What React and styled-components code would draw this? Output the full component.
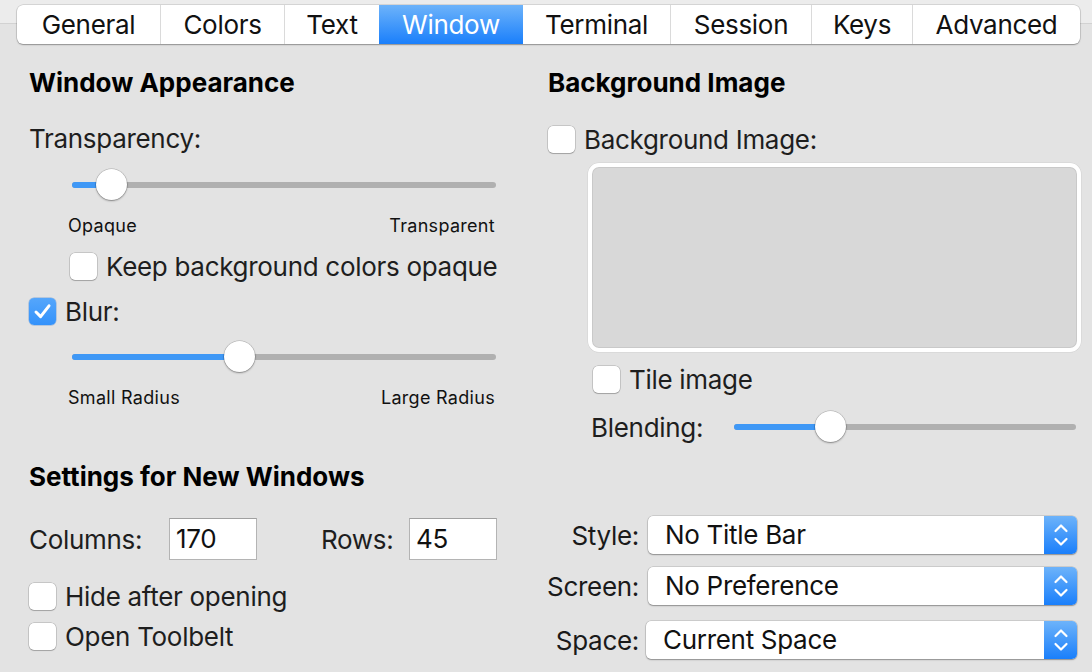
import React from "react";
import styled, { createGlobalStyle } from "styled-components";

const Global = createGlobalStyle`
  html, body { margin: 0; padding: 0; }
  body {
    background: #e3e3e3;
    font-family: Inter, "Noto Sans", "Liberation Sans", sans-serif;
    color: #222;
    width: 1092px;
    height: 672px;
    overflow: hidden;
    letter-spacing: -0.3px;
    white-space: nowrap;
  }
`;

const Page = styled.div`
  width: 1092px;
  height: 672px;
  background: #e3e3e3;
  overflow: hidden;
`;

const Header = styled.div`
  padding: 5px 0 0 17px;
  background: linear-gradient(
    to bottom,
    #ececec 0,
    #ececec 23px,
    #d2d2d2 23px,
    #d2d2d2 24px,
    #e3e3e3 24px
  );
`;

const Segmented = styled.div`
  display: flex;
  width: 1063px;
  height: 39px;
  background: #fff;
  border-radius: 6px;
  overflow: hidden;
  box-shadow: 0 0 0 0.5px rgba(0, 0, 0, 0.18), 0 1px 1.5px rgba(0, 0, 0, 0.3);
`;

const Segment = styled.div`
  width: ${(p) => p.$w}px;
  flex: none;
  display: flex;
  align-items: center;
  justify-content: center;
  font-size: 26px;
  color: ${(p) => (p.$active ? "#fff" : "#111")};
  background: ${(p) =>
    p.$active ? "linear-gradient(to bottom, #6db3fa, #1a7ffb)" : "transparent"};
  border-left: ${(p) => (p.$first || p.$active || p.$afterActive ? "none" : "1px solid #dadada")};
  box-sizing: border-box;
`;

const Body = styled.div`
  display: flex;
  padding: 23px 0 0 29px;
  gap: 51px;
`;

const LeftCol = styled.div`
  width: 468px;
  display: flex;
  flex-direction: column;
`;

const RightCol = styled.div`
  width: 533px;
  display: flex;
  flex-direction: column;
`;

const Heading = styled.div`
  font-size: 26px;
  font-weight: 700;
  color: #000;
  line-height: 32px;
  letter-spacing: 0;
  margin-top: ${(p) => p.$mt || 0}px;
`;

const Label = styled.div`
  font-size: 26px;
  line-height: 32px;
  color: #1e1e1e;
  margin-top: ${(p) => p.$mt || 0}px;
  padding-left: ${(p) => p.$indent || 0}px;
`;

const SliderWrap = styled.div`
  position: relative;
  height: 32px;
  margin-top: ${(p) => p.$mt || 0}px;
  margin-left: ${(p) => p.$indent || 0}px;
  width: ${(p) => p.$w}px;
  flex: none;
`;

const Track = styled.div`
  position: absolute;
  left: 0;
  right: 0;
  top: 13px;
  height: 6px;
  border-radius: 3px;
  background: #b0b0b0;
`;

const Fill = styled.div`
  position: absolute;
  left: 0;
  top: 13px;
  height: 6px;
  border-radius: 3px;
  background: #3f98f6;
`;

const Knob = styled.div`
  position: absolute;
  top: 0;
  width: 31px;
  height: 31px;
  margin-left: -15.5px;
  border-radius: 50%;
  background: #fff;
  box-shadow: 0 0 0 0.5px rgba(0, 0, 0, 0.22), 0 1px 2px rgba(0, 0, 0, 0.35);
`;

function Slider({ w, value, indent, mt }) {
  return (
    <SliderWrap $w={w} $indent={indent} $mt={mt}>
      <Track />
      <Fill style={{ width: value }} />
      <Knob style={{ left: value }} />
    </SliderWrap>
  );
}

const EndLabels = styled.div`
  display: flex;
  justify-content: space-between;
  font-size: 18px;
  line-height: 22px;
  letter-spacing: 0.3px;
  color: #111;
  margin-top: ${(p) => p.$mt || 0}px;
  padding-left: 39px;
  width: 427px;
`;

const CheckRow = styled.div`
  display: flex;
  align-items: center;
  gap: 9px;
  height: 32px;
  font-size: 26px;
  color: #1e1e1e;
  margin-top: ${(p) => p.$mt || 0}px;
  padding-left: ${(p) => p.$indent || 0}px;
`;

const Box = styled.div`
  width: 27px;
  height: 27px;
  flex: none;
  box-sizing: border-box;
  border-radius: 5px;
  display: flex;
  align-items: center;
  justify-content: center;
  background: ${(p) => (p.$checked ? "linear-gradient(to bottom, #55a6fb, #3392fb)" : "#fff")};
  box-shadow: ${(p) =>
    p.$checked
      ? "0 0 0 0.5px rgba(0,90,200,0.4)"
      : "0 0 0 0.5px rgba(0,0,0,0.25), 0 1px 1px rgba(0,0,0,0.18)"};
`;

function Check({ checked, children, indent, mt }) {
  return (
    <CheckRow $indent={indent} $mt={mt}>
      <Box $checked={checked}>
        {checked && (
          <svg width="21" height="21" viewBox="0 0 21 21">
            <path
              d="M4 11 L8.6 15.6 L17 4.8"
              fill="none"
              stroke="#fff"
              strokeWidth="3"
              strokeLinecap="round"
              strokeLinejoin="round"
            />
          </svg>
        )}
      </Box>
      <span>{children}</span>
    </CheckRow>
  );
}

const SizeRow = styled.div`
  display: grid;
  grid-template-columns: 140px 88px 64px 88px 88px;
  align-items: center;
  margin-top: 25px;
  font-size: 26px;
  color: #1e1e1e;
`;

const NumInput = styled.div`
  height: 42px;
  box-sizing: border-box;
  border: 1px solid #b4b4b4;
  border-top-color: #a0a0a0;
  background: #fff;
  font-size: 26px;
  line-height: 40px;
  padding-left: 6px;
  color: #111;
`;

const Well = styled.div`
  margin: 8px 0 0 40px;
  width: 493px;
  height: 189px;
  box-sizing: border-box;
  border: 4px solid #fff;
  border-radius: 11px;
  background: #d8d8d8;
  box-shadow: inset 0 0 0 1px #c9c9c9, 0 0 0 0.5px rgba(0, 0, 0, 0.08);
`;

const BlendRow = styled.div`
  display: flex;
  align-items: center;
  justify-content: space-between;
  width: 485px;
  margin-top: 16px;
  padding-left: 43px;
  font-size: 26px;
  color: #1e1e1e;
`;

const PopupGrid = styled.div`
  display: grid;
  grid-template-columns: 91px 429px;
  column-gap: 9px;
  align-items: center;
  margin-top: 73px;
`;

const PopLabel = styled.div`
  justify-self: end;
  font-size: 26px;
  color: #1a1a1a;
  margin-top: ${(p) => p.$mt || 0}px;
`;

const Popup = styled.div`
  display: flex;
  height: 38px;
  border-radius: 5px;
  background: #fff;
  box-shadow: 0 0 0 0.5px rgba(0, 0, 0, 0.2), 0 1px 1.5px rgba(0, 0, 0, 0.3);
  overflow: hidden;
  margin-left: ${(p) => p.$shift || 0}px;
  margin-top: ${(p) => p.$mt || 0}px;
`;

const PopText = styled.div`
  flex: 1;
  font-size: 26px;
  line-height: 38px;
  padding-left: 17px;
  color: #111;
`;

const Stepper = styled.div`
  width: 33px;
  flex: none;
  display: flex;
  align-items: center;
  justify-content: center;
  background: linear-gradient(to bottom, #6db3fa, #1a7ffb);
`;

function PopupField({ label, value, shift, mt }) {
  return (
    <>
      <PopLabel $mt={mt}>{label}</PopLabel>
      <Popup $shift={shift} $mt={mt}>
        <PopText>{value}</PopText>
        <Stepper>
          <svg width="18" height="28" viewBox="0 0 18 28">
            <path
              d="M3.5 10 L9 4.5 L14.5 10 M3.5 18 L9 23.5 L14.5 18"
              fill="none"
              stroke="#fff"
              strokeWidth="2.2"
              strokeLinecap="round"
              strokeLinejoin="round"
            />
          </svg>
        </Stepper>
      </Popup>
    </>
  );
}

const tabs = [
  ["General", 143],
  ["Colors", 124],
  ["Text", 95],
  ["Window", 144],
  ["Terminal", 147],
  ["Session", 141],
  ["Keys", 101],
  ["Advanced", 168],
];

export default function App() {
  const activeIdx = 3;
  return (
    <Page>
      <Global />
      <Header>
        <Segmented>
          {tabs.map(([t, w], i) => (
            <Segment
              key={t}
              $w={w}
              $first={i === 0}
              $active={i === activeIdx}
              $afterActive={i === activeIdx + 1}
            >
              {t}
            </Segment>
          ))}
        </Segmented>
      </Header>
      <Body>
        <LeftCol>
          <Heading>Window Appearance</Heading>
          <Label $mt={24}>Transparency:</Label>
          <Slider w={424} value={39} indent={43} mt={14} />
          <EndLabels $mt={14}>
            <span>Opaque</span>
            <span>Transparent</span>
          </EndLabels>
          <Check indent={41} mt={13}>
            Keep background colors opaque
          </Check>
          <Check checked mt={13}>
            Blur:
          </Check>
          <Slider w={424} value={167} indent={43} mt={14} />
          <EndLabels $mt={14}>
            <span>Small Radius</span>
            <span>Large Radius</span>
          </EndLabels>
          <Heading $mt={52}>Settings for New Windows</Heading>
          <SizeRow>
            <span>Columns:</span>
            <NumInput>170</NumInput>
            <span />
            <span>Rows:</span>
            <NumInput>45</NumInput>
          </SizeRow>
          <Check mt={20}>Hide after opening</Check>
          <Check mt={8}>Open Toolbelt</Check>
        </LeftCol>
        <RightCol>
          <Heading>Background Image</Heading>
          <Check mt={24}>Background Image:</Check>
          <Well />
          <Check indent={45} mt={11}>
            Tile image
          </Check>
          <BlendRow>
            <span>Blending:</span>
            <Slider w={342} value={96} />
          </BlendRow>
          <PopupGrid>
            <PopupField label="Style:" value="No Title Bar" />
            <PopupField label="Screen:" value="No Preference" mt={13} />
            <PopupField label="Space:" value="Current Space" shift={-2} mt={16} />
          </PopupGrid>
        </RightCol>
      </Body>
    </Page>
  );
}
